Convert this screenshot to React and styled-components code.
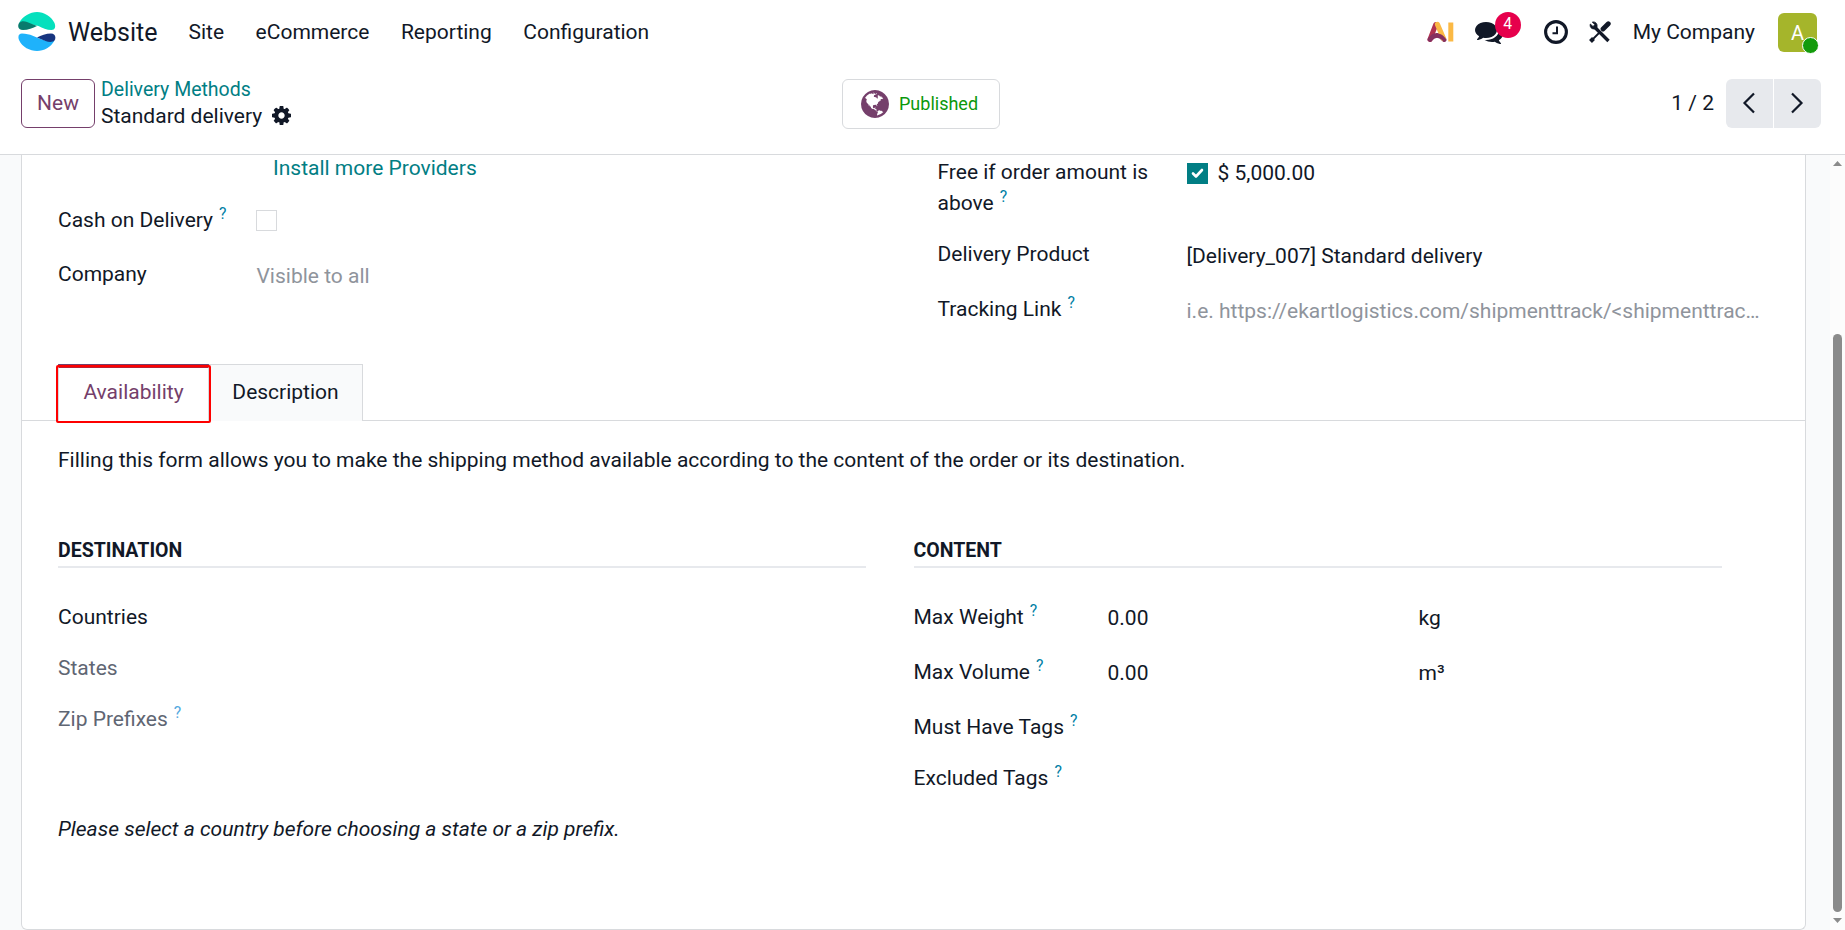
import React from 'react';
import styled, { createGlobalStyle } from 'styled-components';

const GlobalStyle = createGlobalStyle`
  *, *::before, *::after { box-sizing: border-box; }
  body {
    margin: 0;
    background: #fff;
    color: #111827;
    font-family: Roboto, "Noto Sans", sans-serif;
    font-size: 21px;
    line-height: 31px;
    overflow: hidden;
  }
`;

const Page = styled.div`
  display: flex;
  flex-direction: column;
  width: 100%;
  height: 930px;
  overflow: hidden;
`;

const Navbar = styled.header`
  display: flex;
  align-items: center;
  height: 64px;
  padding: 0 28px 0 18px;
  flex: none;
`;

const Brand = styled.div`
  font-size: 25px;
  margin: 0 31px 0 12px;
`;

const Menu = styled.nav`
  display: flex;
  gap: 31.5px;
  flex: 1;
`;

const Systray = styled.div`
  display: flex;
  align-items: center;
`;

const SystrayItem = styled.div`
  display: flex;
  position: relative;
  margin-right: ${(p) => p.$gap}px;
`;

const Badge = styled.span`
  position: absolute;
  left: 20px;
  top: -6px;
  width: 26px;
  height: 26px;
  border-radius: 13px;
  background: #e6004c;
  color: #fff;
  font-size: 15.75px;
  line-height: 24px;
  text-align: center;
`;

const Avatar = styled.div`
  position: relative;
  width: 39px;
  height: 39px;
  border-radius: 6px;
  background: #a5b52b;
  color: #fff;
  font-size: 20px;
  line-height: 41px;
  text-align: center;
`;

const Presence = styled.i`
  position: absolute;
  right: -2px;
  bottom: -2px;
  width: 17px;
  height: 17px;
  border: 1px solid #fff;
  border-radius: 50%;
  background: #149b0c;
`;

const ControlPanel = styled.div`
  display: grid;
  grid-template-columns: 1fr auto 1fr;
  align-items: center;
  height: 91px;
  padding: 0 24px 11px 21px;
  border-bottom: 1px solid #d8dadd;
  flex: none;
`;

const Start = styled.div`
  display: flex;
  align-items: center;
`;

const NewButton = styled.button`
  width: 74px;
  height: 49px;
  padding: 0;
  border: 1px solid #753f6b;
  border-radius: 6px;
  background: #fff;
  color: #753f6b;
  font: inherit;
`;

const Breadcrumb = styled.div`
  display: flex;
  flex-direction: column;
  margin-left: 6px;
  padding-bottom: 2px;
  line-height: 26px;
`;

const Crumb = styled.a`
  color: #017e84;
  font-size: 19.5px;
`;

const Current = styled.div`
  display: flex;
  align-items: center;
  gap: 10px;
`;

const StatButton = styled.button`
  display: flex;
  align-items: center;
  gap: 10px;
  width: 158px;
  height: 50px;
  padding: 0 0 0 18px;
  border: 1px solid #d8dadd;
  border-radius: 6px;
  background: #fff;
  color: #0b980b;
  font: inherit;
  font-size: 18px;
`;

const Pager = styled.div`
  display: flex;
  align-items: center;
  justify-content: flex-end;
  gap: 1px;
`;

const Counter = styled.span`
  margin-right: 11px;
`;

const PagerButton = styled.button`
  display: flex;
  align-items: center;
  justify-content: center;
  width: 47px;
  height: 49px;
  padding: 0 1px 2px 0;
  border: 0;
  border-radius: ${(p) => (p.$last ? '0 6px 6px 0' : '6px 0 0 6px')};
  background: #e7e9ed;
`;

const Content = styled.main`
  display: flex;
  flex: 1;
  min-height: 0;
  padding-left: 21px;
  background: #f9fafb;
`;

const Sheet = styled.section`
  width: 1785px;
  height: 775px;
  border: 1px solid #d8dadd;
  border-top: 0;
  border-radius: 0 0 6px 6px;
  background: #fff;
`;

const Scrollbar = styled.div`
  display: flex;
  flex-direction: column;
  align-items: center;
  width: 15px;
  margin-left: auto;
  padding-top: 6px;
  background: #fcfcfc;
`;

const Arrow = styled.i`
  width: 9px;
  height: 5px;
  background: #8b8b8b;
  clip-path: ${(p) => (p.$down ? 'polygon(0 0, 100% 0, 50% 100%)' : 'polygon(50% 0, 100% 100%, 0 100%)')};
`;

const Thumb = styled.div`
  width: 9px;
  height: 578px;
  margin: 168px 0 6px;
  border-radius: 5px;
  background: #8b8b8b;
`;

const Details = styled.div`
  display: grid;
  grid-template-columns: 879.5px 1fr;
  height: 209px;
  padding-left: 36px;
`;

const Conditions = styled.div`
  display: grid;
  grid-template-columns: 808px 808px;
  column-gap: 47.5px;
  padding: 60px 0 0 36px;
`;

const Field = styled.div`
  display: grid;
  grid-template-columns: ${(p) => p.$template};
  align-items: start;
  height: ${(p) => p.$height}px;
`;

const Label = styled.label`
  color: ${(p) => (p.$muted ? '#5f6673' : 'inherit')};
`;

const Help = styled.sup`
  position: relative;
  top: -8px;
  margin-left: 6px;
  color: ${(p) => (p.$muted ? '#54a9e0' : '#0180a5')};
  font-size: 15.75px;
  line-height: 0;
  vertical-align: baseline;
`;

const Value = styled.div`
  display: flex;
  align-items: center;
  padding-top: ${(p) => p.$shift || 0}px;
  color: ${(p) => (p.$placeholder ? '#8f949c' : 'inherit')};
  white-space: nowrap;
`;

const InstallLink = styled.a`
  display: block;
  height: 52px;
  padding-left: 215px;
  color: #017e84;
`;

const Checkbox = styled.span`
  display: inline-flex;
  align-items: center;
  justify-content: center;
  width: 21px;
  height: 21px;
  margin-right: 10px;
  border: 1px solid ${(p) => (p.$checked ? '#017e84' : '#d8dadd')};
  background: ${(p) => (p.$checked ? '#017e84' : '#fff')};
`;

const LeftGroup = styled.div`
  margin-top: -2px;
`;

const RightGroup = styled.div`
  padding-top: 2px;
`;

const Group = styled.div``;

const Tabs = styled.div`
  display: flex;
  height: 57px;
  padding-left: 36px;
  border-bottom: 1px solid #d8dadd;
`;

const Tab = styled.div`
  position: relative;
  width: ${(p) => p.$width}px;
  height: 57px;
  padding-top: ${(p) => (p.$active ? 9 : 12)}px;
  border: 1px solid #d8dadd;
  border-bottom: 0;
  border-top: ${(p) => (p.$active ? '4px solid #753f6b' : '1px solid #d8dadd')};
  border-left-width: ${(p) => (p.$active ? 1 : 0)}px;
  background: ${(p) => (p.$active ? '#fff' : '#f9fafb')};
  color: ${(p) => (p.$active ? '#753f6b' : 'inherit')};
  text-align: center;
`;

const Highlight = styled.div`
  position: absolute;
  left: -3px;
  top: -3px;
  width: 155px;
  height: 58px;
  border: 2px solid #fe0000;
  border-radius: 2px;
  box-shadow: inset 0 1px 0 rgba(254, 0, 0, 0.5);
  z-index: 1;
`;

const Intro = styled.p`
  margin: 0;
  padding: 24px 36px 0;
`;

const GroupTitle = styled.h2`
  margin: 0 0 34px;
  border-bottom: 2px solid #e7e9ed;
  font-size: 19.5px;
  line-height: 30px;
  font-weight: 700;
`;

const Note = styled.em`
  display: block;
  padding-left: 36px;
`;

const BrandLogo = () => (
  <svg width="38" height="40" viewBox="0 0 38 40">
    <path d="M1 11C5 4 12 0 19 0s14 4 17.500 11c1.500 4 .5 7-3 7-5 0-9-2-13-4L3 10z" fill="#05e0bd" />
    <path d="M1 11c2-2 5-2 8-1l10 4c-4 2-9 4-14 4-4 0-6-3-4-7z" fill="#087b6d" />
    <path d="M1 28c-1.500-4 0-6.500 3-6.500 8 0 14 4 20 6 5 1.500 9 2 12.500 1C33 35 26 39 19 39S4 35 1 28z" fill="#1eb2fb" />
    <path d="M19 25.500c4-2 9-4 14-4 4 0 5.500 4 3.500 7-2 2-6 1.500-9 .5z" fill="#17357f" />
  </svg>
);

const AiLogo = () => (
  <svg width="27" height="22" viewBox="0 0 27 22" fill="none" strokeLinecap="round" strokeLinejoin="round">
    <path d="M8.800 3.500L3 18.500" stroke="#b03250" strokeWidth="5" />
    <path d="M3 18.500c4-5 9-6 14 0" stroke="#86305f" strokeWidth="4.600" />
    <path d="M10.500 3.500l6 14" stroke="#fbb945" strokeWidth="5.200" />
    <path d="M9 15c3-1 6 .5 8.500 4" stroke="#86305f" strokeWidth="3.800" />
    <path d="M23.800 1.500v19" stroke="#fbb945" strokeWidth="5" strokeLinecap="butt" />
  </svg>
);

const Chats = () => (
  <svg width="28" height="28" viewBox="0 0 1792 1792" fill="#111827">
    <path d="M1408 768q0 139-94 257t-256.500 186.500-353.500 68.500q-86 0-176-16-124 88-278 128-36 9-86 16h-3q-11 0-20.500-8t-11.500-21q-1-3-1-6.500t.5-6.500 2-6l2.500-5 3.500-5.500 4-5 4.500-5 4-4.500q5-6 23-25t26-29.500 22.500-29 25-38.500 20.500-44q-124-72-195-177t-71-224q0-139 94-257t256.500-186.500 353.500-68.500 353.500 68.500 256.500 186.500 94 257zm384 256q0 120-71 224.500t-195 176.500q10 24 20.500 44t25 38.500 22.500 29 26 29.500 23 25q1 1 4 4.500t4.500 5 4 5 3.500 5.500l2.500 5 2 6 .5 6.500-1 6.500q-3 14-13 22t-22 7q-50-7-86-16-154-40-278-128-90 16-176 16-271 0-472-132 58 4 88 4 161 0 309-45t264-129q125-92 192-212t67-254q0-77-23-152 129 71 204 178t75 230z" />
  </svg>
);

const Clock = () => (
  <svg width="24" height="24" viewBox="0 0 24 24" fill="none" stroke="#111827">
    <circle cx="12" cy="12" r="10.400" strokeWidth="3.100" />
    <path d="M13 6.500v6.800H8.500" strokeWidth="2" />
  </svg>
);

const Tools = () => (
  <svg width="22" height="22" viewBox="0 0 22 22" fill="none" stroke="#111827">
    <path d="M5 5.500L19.500 20" strokeWidth="3.300" />
    <path d="M1.300 3L4 5.500 5.800 3.700 3.300 1C7 .3 9.300 3.500 7.500 7.500 4 9 .3 7 1.300 3z" fill="#111827" strokeWidth=".8" />
    <path d="M1.500 20.500l3-3" strokeWidth="4" />
    <path d="M3 19l7-7" strokeWidth="1.800" />
    <path d="M14 8l5.300-5.300" strokeWidth="4.800" strokeLinecap="round" />
  </svg>
);

const Cog = () => (
  <svg width="19" height="19" viewBox="128 128 1536 1536" fill="#111827">
    <path d="M1152 896q0-106-75-181t-181-75-181 75-75 181 75 181 181 75 181-75 75-181zm512-109v222q0 12-8 23t-20 13l-185 28q-19 54-39 91 35 50 107 138 10 12 10 25t-9 23q-27 37-99 108t-94 71q-12 0-26-9l-138-108q-44 23-91 38-16 136-29 186-7 28-36 28h-222q-14 0-24.500-8.500t-11.500-21.500l-28-184q-49-16-90-37l-141 107q-10 9-25 9-14 0-25-11-126-114-165-168-7-10-7-23 0-12 8-23 15-21 51-66.500t54-70.500q-27-50-41-99l-183-27q-13-2-21-12.500t-8-23.500v-222q0-12 8-23t19-13l186-28q14-46 39-92-40-57-107-138-10-12-10-24 0-10 9-23 26-36 98.500-107.500t94.500-71.500q13 0 26 10l138 107q44-23 91-38 16-136 29-186 7-28 36-28h222q14 0 24.500 8.500t11.500 21.500l28 184q49 16 90 37l142-107q9-9 24-9 13 0 25 10 129 119 165 170 7 8 7 22 0 12-8 23-15 21-51 66.500t-54 70.500q26 50 41 98l183 28q13 2 21 12.500t8 23.500z" />
  </svg>
);

const Globe = () => (
  <svg width="28" height="28" viewBox="128 128 1536 1536" fill="#753f6b">
    <path d="M896 128q209 0 385.500 103t279.500 279.500 103 385.500-103 385.500-279.500 279.500-385.500 103-385.500-103-279.500-279.500-103-385.500 103-385.500 279.500-279.500 385.500-103zm274 521q-2 1-9.500 9.500t-13.500 9.500q2 0 4.500-5t5-11 3.500-7q6-7 22-15 14-6 52-12 34-8 51 11-2-2 9.500-13t14.500-12q3-2 15-4.500t15-7.500l2-22q-12 1-17.500-7t-6.500-21q0 2-6 8 0-7-4.500-8t-11.500 1-9 1q-10-3-15-7.500t-8-16.500-4-15q-2-5-9.500-11t-9.500-10q-1-2-2.500-5.500t-3-6.500-4-5.500-5.500-2.500-7 5-7.500 10-4.500 5q-3-2-6-1.500t-4.500 1-4.500 3-5 3.500q-3 2-8.500 3t-8.500 2q15-5-1-11-10-4-16-3 9-4 7.500-12t-8.500-14h5q-1-4-8.500-8.500t-17.500-8.500-13-6q-8-5-34-9.500t-33-.5q-5 6-4.500 10.500t4 14 3.500 12.500q1 6-5.500 13t-6.500 12q0 7 14 15.500t10 21.500q-3 8-16 16t-16 12q-5 8-1.500 18.500t10.500 16.500q2 2 1.500 4t-3.500 4.500-5.500 4-6.500 3.500l-3 2q-11 5-20.500-6t-13.500-26q-7-25-16-30-23-8-29 1-5-13-41-26-25-9-58-4 6-1 0-15-7-15-19-12 3-6 4-17.500t1-13.500q3-13 12-23 1-1 7-8.500t9.500-13.500.5-6q35 4 50-11 5-5 11.500-17t10.500-17q9-6 14-5.500t14.500 5.500 14.500 5q14 1 15.500-11t-7.500-20q12 1 3-17-4-7-8-9-12-4-27 5-8 4 2 8-1-1-9.500 10.500t-16.500 17.500-16-5q-1-1-5.500-13.500t-9.500-13.500q-8 0-16 15 3-8-11-15t-24-8q19-12-8-27-7-4-20.500-5t-19.500 4q-5 7-5.500 11.500t5 8 10.500 5.500 11.500 4 8.500 3q14 10 8 14-2 1-8.500 3.500t-11.500 4.500-6 4q-3 4 0 14t-2 14q-5-5-9-17.500t-7-16.500q7 9-25 6l-10-1q-4 0-16 2t-20.500 1-13.500-8q-4-8 0-20 1-4 4-2-4-3-11-9.500t-10-8.500q-46 15-94 41 6 1 12-1 5-2 13-6.500t10-5.500q34-14 42-7l5-5q14 16 20 25-7-4-30-1-20 6-22 12 7 12 5 18-4-3-11.500-10t-14.500-11-15-5q-16 0-22 1-146 80-235 222 7 7 12 8 4 1 5 9t2.500 11 11.500-3q9 8 3 19 1-1 44 27 19 17 21 21 3 11-10 18-1-2-9-9t-9-4q-3 5 .5 18.500t10.500 12.500q-7 0-9.500 16t-2.500 35.500-1 23.500l2 1q-3 12 5.500 34.500t21.500 19.500q-13 3 20 43 6 8 8 9 3 2 12 7.500t15 10 10 10.500q4 5 10 22.500t14 23.500q-2 6 9.500 20t10.500 23q-1 0-2.500 1t-2.500 1q3 7 15.500 14t15.500 13q1 3 2 10t3 11 8 2q2-20-24-62-15-25-17-29-3-5-5.500-15.500t-4.500-14.500q2 0 6 1.500t8.500 3.500 7.500 4 2 3q-3 7 2 17.500t12 18.500 17 19 12 13q6 6 14 19.500t0 13.500q9 0 20 10.500t17 19.500q5 8 8 26t5 24q2 7 8.500 13.500t12.500 9.500l16 8 13 7q5 2 18.500 10.500t21.500 11.500q10 4 16 4t14.500-2.500 13.500-3.500q15-2 29 15t21 21q36 19 55 11-2 1 .5 7.500t8 15.500 9 14.500 5.500 8.500q5 6 18 15t18 15q6-4 7-9-3 8 7 20t18 10q14-3 14-32-31 15-49-18 0-1-2.500-5.500t-4-8.500-2.500-8.500 0-7.500 5-3q9 0 10-3.500t-2-12.500-4-13q-1-8-11-20t-12-15q-5 9-16 8t-16-9q0 1-1.500 5.500t-1.500 6.500q-13 0-15-1 1-3 2.500-17.500t3.500-22.500q1-4 5.500-12t7.500-14.500 4-12.500-4.500-9.500-17.500-2.500q-19 1-26 20-1 3-3 10.500t-5 11.500-9 7q-7 3-24 2t-24-5q-13-8-22.500-29t-9.500-37q0-10 2.500-26.500t3-25-5.500-24.500q3-2 9-9.500t10-10.500q2-1 4.500-1.500t4.500 0 4-1.500 3-6q-1-1-4-3-3-3-4-3 7 3 28.500-1.500t27.500 1.500q15 11 22-2 0-1-2.500-9.500t-.5-13.500q5 27 29 9 3 3 15.500 5t17.500 5q3 2 7 5.500t5.500 4.500 5-.5 8.500-6.500q10 14 12 24 11 40 19 44 7 3 11 2t4.500-9.500 0-14-1.500-12.500l-1-8v-18l-1-8q-15-3-18.500-12t1.500-18.500 15-18.500q1-1 8-3.500t15.500-6.500 12.500-8q21-19 15-35 7 0 11-9-1 0-5-3t-7.500-5-4.500-2q9-5 2-16 5-3 7.500-11t7.500-10q9 12 21 2 7-8 1-16 5-7 20.500-10.500t18.500-9.500q7 2 8-2t1-12 3-12q4-5 15-9t13-5l17-11q3-4 0-4 18 2 31-11 10-11-6-20 3-6-3-9.500t-15-5.500q3-1 11.500-.5t10.500-1.500q15-10-7-16-17-5-43 12zm-163 877q206-36 351-189-3-3-12.500-4.500t-12.500-3.500q-18-7-24-8 1-7-2.500-13t-8-9-12.500-8-11-7q-2-2-7-6t-7-5.500-7.500-4.500-8.500-2-10 1l-3 1q-3 1-5.500 2.500t-5.500 3-4 3 0 2.500q-21-17-36-22-5-1-11-5.500t-10.500-7-10-1.500-11.500 7q-5 5-6 15t-2 13q-7-5 0-17.500t2-18.500q-3-6-10.500-4.500t-12 4.500-11.500 8.500-9 6.500-8.500 5.500-8.500 7.500q-3 4-6 12t-5 11q-2-4-11.500-6.500t-9.500-5.500q2 10 4 35t5 38q7 31-12 48-27 25-29 40-4 22 12 26 0 7-8 20.500t-7 21.500q0 6 2 16z" />
  </svg>
);

const Chevron = ({ right }) => (
  <svg width="14" height="22" viewBox="0 0 14 22" fill="none" stroke="#111827" strokeWidth="2.200">
    <path d={right ? 'M2 1.500L11.500 11 2 20.500' : 'M12 1.500L2.500 11 12 20.500'} />
  </svg>
);

const Check = () => (
  <svg width="13" height="11" viewBox="0 0 13 11" fill="none" stroke="#fff" strokeWidth="2.600" strokeLinecap="round" strokeLinejoin="round">
    <path d="M2 5.500l3 3L11 2" />
  </svg>
);

const menu = ['Site', 'eCommerce', 'Reporting', 'Configuration'];

export default function App() {
  return (
    <Page>
      <GlobalStyle />
      <Navbar>
        <BrandLogo />
        <Brand>Website</Brand>
        <Menu>{menu.map((m) => <span key={m}>{m}</span>)}</Menu>
        <Systray>
          <SystrayItem $gap={21}><AiLogo /></SystrayItem>
          <SystrayItem $gap={41}><Chats /><Badge>4</Badge></SystrayItem>
          <SystrayItem $gap={21}><Clock /></SystrayItem>
          <SystrayItem $gap={22}><Tools /></SystrayItem>
          <SystrayItem $gap={23}>My Company</SystrayItem>
          <Avatar>A<Presence /></Avatar>
        </Systray>
      </Navbar>
      <ControlPanel>
        <Start>
          <NewButton>New</NewButton>
          <Breadcrumb>
            <Crumb>Delivery Methods</Crumb>
            <Current>Standard delivery <Cog /></Current>
          </Breadcrumb>
        </Start>
        <StatButton><Globe />Published</StatButton>
        <Pager>
          <Counter>1 / 2</Counter>
          <PagerButton><Chevron /></PagerButton>
          <PagerButton $last><Chevron right /></PagerButton>
        </Pager>
      </ControlPanel>
      <Content>
        <Sheet>
          <Details>
            <LeftGroup>
              <InstallLink>Install more Providers</InstallLink>
              <Field $template="198px 1fr" $height={54}>
                <Label>Cash on Delivery<Help>?</Help></Label>
                <Value $shift={5}><Checkbox /></Value>
              </Field>
              <Field $template="198.5px 1fr" $height={103}>
                <Label>Company</Label>
                <Value $shift={2} $placeholder>Visible to all</Value>
              </Field>
            </LeftGroup>
            <RightGroup>
              <Field $template="249px 1fr" $height={82}>
                <Label>Free if order amount is<br />above<Help>?</Help></Label>
                <Value $shift={1}><Checkbox $checked><Check /></Checkbox>$ 5,000.00</Value>
              </Field>
              <Field $template="249px 1fr" $height={55}>
                <Label>Delivery Product</Label>
                <Value $shift={2}>[Delivery_007] Standard delivery</Value>
              </Field>
              <Field $template="249px 1fr" $height={55}>
                <Label>Tracking Link<Help>?</Help></Label>
                <Value $shift={2} $placeholder>i.e. https://ekartlogistics.com/shipmenttrack/&lt;shipmenttrac…</Value>
              </Field>
            </RightGroup>
          </Details>
          <Tabs>
            <Tab $active $width={151}>Availability<Highlight /></Tab>
            <Tab $width={154}>Description</Tab>
          </Tabs>
          <Intro>Filling this form allows you to make the shipping method available according to the content of the order or its destination.</Intro>
          <Conditions>
            <Group>
              <GroupTitle>DESTINATION</GroupTitle>
              <Field $height={51}><Label>Countries</Label></Field>
              <Field $height={51}><Label $muted>States</Label></Field>
              <Field $height={51}><Label $muted>Zip Prefixes<Help $muted>?</Help></Label></Field>
            </Group>
            <Group>
              <GroupTitle>CONTENT</GroupTitle>
              <Field $template="194px 311px 1fr" $height={55}>
                <Label>Max Weight<Help>?</Help></Label>
                <Value $shift={1}>0.00</Value>
                <Value $shift={1}>kg</Value>
              </Field>
              <Field $template="194px 311px 1fr" $height={55}>
                <Label>Max Volume<Help>?</Help></Label>
                <Value $shift={1}>0.00</Value>
                <Value $shift={1}>m³</Value>
              </Field>
              <Field $height={51}><Label>Must Have Tags<Help>?</Help></Label></Field>
              <Field $height={51}><Label>Excluded Tags<Help>?</Help></Label></Field>
            </Group>
          </Conditions>
          <Note>Please select a country before choosing a state or a zip prefix.</Note>
        </Sheet>
        <Scrollbar>
          <Arrow />
          <Thumb />
          <Arrow $down />
        </Scrollbar>
      </Content>
    </Page>
  );
}
